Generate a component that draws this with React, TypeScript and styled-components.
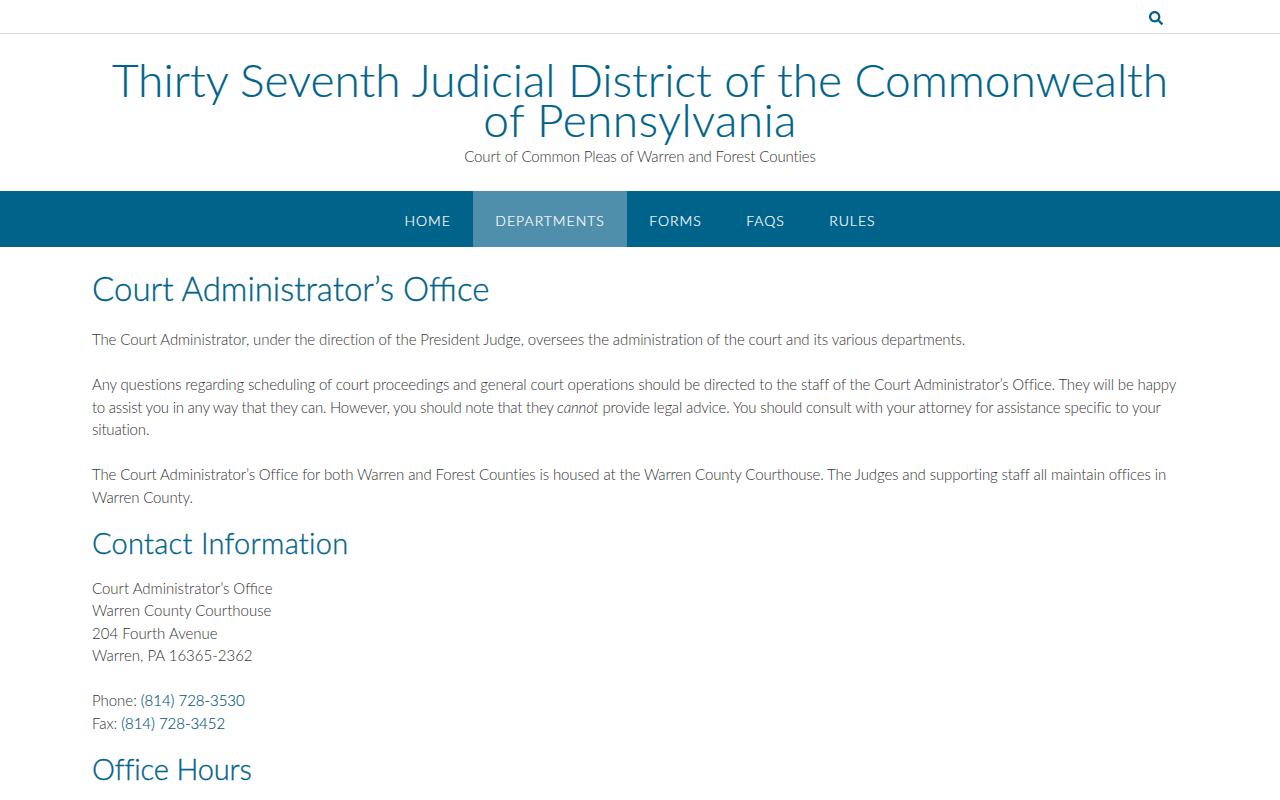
import { createGlobalStyle } from "styled-components";
import styled from "styled-components";
import { FaSearch } from "react-icons/fa";

const GlobalStyle = createGlobalStyle`
  html, body {
    margin: 0;
    padding: 0;
    background: #fff;
    overflow: hidden;
    height: 800px;
  }
  body {
    font-family: Lato, "Liberation Sans", sans-serif;
    font-weight: 300;
    font-size: 15px;
    line-height: 22.5px;
    color: #333;
  }
`;

const TopBar = styled.div`
  height: 33px;
  border-bottom: 1px solid #ddd;
  display: flex;
  justify-content: flex-end;
  align-items: center;
  padding-right: 117px;
  color: #00648a;
  font-size: 14px;

  svg {
    margin-top: 2px;
  }
`;

const Branding = styled.header`
  height: 157px;
  padding-top: 26px;
  box-sizing: border-box;
  text-align: center;
`;

const SiteTitle = styled.h1`
  margin: 0 auto;
  width: 1096px;
  font-size: 46px;
  line-height: 40px;
  font-weight: 300;
  color: #00648a;
  -webkit-text-stroke: 0.2px #00648a;
`;

const Tagline = styled.p`
  margin: 5px 0 0;
  font-size: 15px;
  line-height: 22px;
  letter-spacing: -0.12px;
`;

const NavBar = styled.nav`
  height: 56px;
  background: #00648a;
  display: flex;
  justify-content: center;
`;

const NavItem = styled.a<{ $active?: boolean }>`
  display: flex;
  align-items: center;
  padding: 4px 22.2px 0;
  font-size: 14px;
  font-weight: 300;
  letter-spacing: 1px;
  color: #fff;
  -webkit-text-stroke: 0.2px #fff;
  background: ${(p) => (p.$active ? "#4f8fab" : "transparent")};
`;

const Main = styled.main`
  width: 1096px;
  margin: 0 auto;
  padding-top: 20px;
`;

const PageTitle = styled.h2`
  margin: 0 0 19px;
  font-size: 33px;
  line-height: 42px;
  font-weight: 300;
  color: #00648a;
  -webkit-text-stroke: 0.35px #00648a;
`;

const SectionTitle = styled.h3<{ $spacing?: number }>`
  margin: 16.5px 0 16px;
  font-size: 29px;
  line-height: 36px;
  font-weight: 300;
  letter-spacing: ${(p) => p.$spacing ?? 0}px;
  color: #00648a;
  -webkit-text-stroke: 0.35px #00648a;
`;

const Para = styled.p<{ $spacing?: number }>`
  margin: 0;
  letter-spacing: ${(p) => p.$spacing ?? 0}px;

  & + & {
    margin-top: 22.5px;
  }
`;

const Run = styled.span<{ $spacing: number }>`
  letter-spacing: ${(p) => p.$spacing}px;
`;

const PhoneLink = styled.a`
  color: #00587a;
  -webkit-text-stroke: 0.15px #00587a;
`;

export default function App() {
  return (
    <>
      <GlobalStyle />
      <TopBar>
        <FaSearch />
      </TopBar>
      <Branding>
        <SiteTitle>
          Thirty Seventh Judicial District of the Commonwealth <Run $spacing={0.4}>of Pennsylvania</Run>
        </SiteTitle>
        <Tagline>Court of Common Pleas of Warren and Forest Counties</Tagline>
      </Branding>
      <NavBar>
        <NavItem>HOME</NavItem>
        <NavItem $active>DEPARTMENTS</NavItem>
        <NavItem>FORMS</NavItem>
        <NavItem>FAQS</NavItem>
        <NavItem>RULES</NavItem>
      </NavBar>
      <Main>
        <PageTitle>Court Administrator’s Office</PageTitle>
        <Para $spacing={-0.1}>
          The Court Administrator, under the direction of the President Judge, oversees the administration of the court and its various departments.
        </Para>
        <Para $spacing={-0.148}>
          Any questions regarding scheduling of court proceedings and general court operations should be directed to the staff of the Court Administrator’s Office. They will be happy{" "}
          <Run $spacing={-0.25}>to assist you in any way that they can. However, you should note that they </Run>
          <em>cannot</em>
          <Run $spacing={-0.16}> provide legal advice. You should consult with your attorney for assistance specific to your situation.</Run>
        </Para>
        <Para $spacing={-0.125}>
          The Court Administrator’s Office for both Warren and Forest Counties is housed at the Warren County Courthouse. The Judges and supporting staff all maintain offices in Warren County.
        </Para>
        <SectionTitle $spacing={0.27}>Contact Information</SectionTitle>
        <Para>
          Court Administrator’s Office
          <br />
          Warren County Courthouse
          <br />
          204 Fourth Avenue
          <br />
          Warren, PA 16365-2362
        </Para>
        <Para $spacing={-0.03}>
          Phone: <PhoneLink>(814) 728-3530</PhoneLink>
          <br />
          Fax: <PhoneLink>(814) 728-3452</PhoneLink>
        </Para>
        <SectionTitle $spacing={-0.15}>Office Hours</SectionTitle>
      </Main>
    </>
  );
}
